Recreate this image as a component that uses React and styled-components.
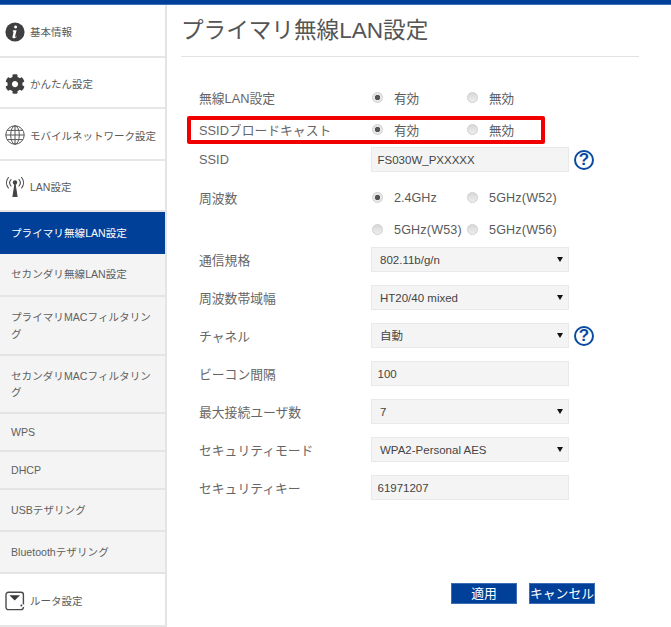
import React from "react";
import styled, { createGlobalStyle } from "styled-components";
import { FaCog } from "react-icons/fa";

const Global = createGlobalStyle`
  html, body { margin: 0; padding: 0; background: #fff; }
  body { font-family: "Liberation Sans", "Noto Sans CJK JP", sans-serif; overflow: hidden; }
  * { box-sizing: border-box; }
`;

const Page = styled.div`
  width: 671px;
  height: 627px;
  display: flex;
  flex-direction: column;
  overflow: hidden;
`;
const TopBar = styled.div`
  height: 5px;
  flex: none;
  background: #004098;
  border-bottom: 1px solid #3d6db3;
`;
const Body = styled.div`
  display: flex;
  flex: 1;
  min-height: 0;
`;
const Sidebar = styled.nav`
  width: 167px;
  flex: none;
  border-right: 2px solid #e4e4e4;
  display: flex;
  flex-direction: column;
`;
const MainItem = styled.a`
  height: ${(p) => p.$h}px;
  flex: none;
  display: flex;
  align-items: center;
  gap: 5px;
  padding: 2px 0 0 5px;
  background: #fff;
  border-bottom: 2px solid #e6e6e6;
  color: #5a5a5a;
  font-size: 10.5px;
`;
const IconBox = styled.span`
  width: 20px;
  height: 22px;
  flex: none;
  display: flex;
  align-items: center;
  justify-content: center;
  color: #3f3f3f;
`;
const SubItem = styled.a`
  height: ${(p) => p.$h}px;
  flex: none;
  display: flex;
  align-items: center;
  padding: 0 11px;
  background: ${(p) => (p.$active ? "#004098" : "#f4f4f4")};
  border-bottom: ${(p) => (p.$active ? "0" : "2px solid #e4e4e4")};
  color: ${(p) => (p.$active ? "#fff" : "#5f5f5f")};
  font-size: 10.6px;
  line-height: 16.5px;
`;
const Main = styled.main`
  flex: 1;
  padding-left: 15px;
  display: flex;
  flex-direction: column;
`;
const Title = styled.h1`
  width: 458px;
  height: 52px;
  margin: 0 0 0 -1px;
  padding-top: 10px;
  border-bottom: 1px solid #e2e2e2;
  font-size: 22.6px;
  line-height: 32px;
  font-weight: 400;
  color: #555;
`;
const Form = styled.form`
  margin: 28px 0 0 17px;
  display: flex;
  flex-direction: column;
`;
const Row = styled.div`
  position: relative;
  height: 25px;
  margin-bottom: ${(p) => p.$gap}px;
  display: flex;
  align-items: center;
`;
const Label = styled.label`
  width: 172px;
  flex: none;
  font-size: 12.8px;
  color: #666;
`;
const Highlight = styled.span`
  position: absolute;
  left: -12px;
  top: -1px;
  width: 358px;
  height: 28px;
  border: 4px solid #f00000;
  border-radius: 2px;
  pointer-events: none;
`;
const Option = styled.label`
  width: 95px;
  flex: none;
  display: flex;
  align-items: center;
  font-size: 12.6px;
  color: #5a5a5a;
  white-space: nowrap;
  letter-spacing: ${(p) => (p.$wide ? "0.15px" : "0")};
`;
const Radio = styled.input.attrs({ type: "radio" })`
  appearance: none;
  width: 11px;
  height: 11px;
  margin: 0 11px 1px 1px;
  flex: none;
  border-radius: 50%;
  border: 1px solid #cfcfcf;
  background: ${(p) =>
    p.checked
      ? "radial-gradient(circle, #555 0 2.4px, #e8e8e8 3px)"
      : "linear-gradient(#d8d8d8, #eeeeee)"};
`;
const TextField = styled.input`
  width: 198px;
  height: 25px;
  padding: 0 5.5px;
  border: 1px solid #e9e9e9;
  background: #f4f4f4;
  font: inherit;
  font-size: 11.5px;
  color: #444;
  outline: none;
`;
const SelectWrap = styled.div`
  position: relative;
  width: 198px;
  height: 25px;
  &::after {
    content: "";
    position: absolute;
    right: 6px;
    top: 10px;
    border-left: 3px solid transparent;
    border-right: 3px solid transparent;
    border-top: 5px solid #111;
  }
`;
const Select = styled.select`
  appearance: none;
  width: 100%;
  height: 100%;
  padding: 0 8px;
  border: 1px solid #e9e9e9;
  border-radius: 0;
  background: #f4f4f4;
  font: inherit;
  font-size: 11.5px;
  color: #444;
  outline: none;
`;
const Help = styled.span`
  width: 20px;
  height: 20px;
  margin-left: 5px;
  flex: none;
  display: flex;
  align-items: center;
  justify-content: center;
  border: 2px solid #0b4a9f;
  border-radius: 50%;
  color: #0b4a9f;
  font-size: 17px;
  font-weight: 700;
`;
const Actions = styled.div`
  margin: 83px 0 0 252px;
  display: flex;
  gap: 12px;
`;
const Button = styled.button`
  width: 66px;
  height: 21px;
  padding: 0;
  border: 1px solid #3d6db3;
  background: #004098;
  color: #fff;
  font: inherit;
  font-size: 12.8px;
  line-height: 19px;
  white-space: nowrap;
`;

const InfoIcon = () => (
  <svg width="20" height="20" viewBox="0 0 20 20">
    <circle cx="10" cy="10" r="9.6" fill="#3f3f3f" />
    <path d="M10.6 3.6a1.5 1.5 0 1 1-.01 0zM8 8.3h3.6L10 14.4c-.1.5.4.5 1.4-.2l.2.5c-1.4 1.2-2.4 1.6-3.3 1.5-.8-.1-1-.7-.8-1.5l1-4.6c.1-.5-.2-.7-.7-.7z" fill="#fff" />
  </svg>
);
const GlobeIcon = () => (
  <svg width="20" height="20" viewBox="0 0 20 20" fill="none" stroke="#555" strokeWidth="1">
    <circle cx="10" cy="10" r="9.2" />
    <ellipse cx="10" cy="10" rx="4.3" ry="9.2" />
    <path d="M10 .8v18.4M.8 10h18.4M2.2 5.4h15.6M2.2 14.6h15.6" />
  </svg>
);
const AntennaIcon = () => (
  <svg width="20" height="22" viewBox="0 0 20 22" fill="none" stroke="#444" strokeWidth="1.1" strokeLinecap="round">
    <circle cx="10" cy="6.5" r="2.2" fill="#444" stroke="none" />
    <path d="M10 7.5L8 20.5h4L10 7.5z" fill="#444" />
    <path d="M6 3.5a5 5 0 0 0 0 6.5M14 3.5a5 5 0 0 1 0 6.5M3.4 1.5a8.4 8.4 0 0 0 0 10.5M16.6 1.5a8.4 8.4 0 0 1 0 10.5" />
  </svg>
);
const RouterIcon = () => (
  <svg width="20" height="20" viewBox="0 0 20 20" fill="none">
    <rect x="1" y="1.2" width="17.4" height="17.4" rx="2.4" stroke="#4a4a4a" strokeWidth="1.4" />
    <path d="M4.4 4.2h10.6L9.7 9.6z" fill="#3a3a3a" />
    <rect x="15.6" y="13.4" width="3.4" height="2.6" fill="#fff" />
    <circle cx="16.4" cy="14.6" r="1" fill="#3a3a3a" />
  </svg>
);

const OnOff = ({ name, on }) => (
  <>
    <Option>
      <Radio name={name} checked={on} readOnly />
      有効
    </Option>
    <Option>
      <Radio name={name} checked={false} readOnly />
      無効
    </Option>
  </>
);

const Dropdown = ({ value }) => (
  <SelectWrap>
    <Select value={value} onChange={() => {}}>
      <option>{value}</option>
    </Select>
  </SelectWrap>
);

const subItems = [
  ["プライマリ無線LAN設定", 42, true],
  ["セカンダリ無線LAN設定", 43],
  ["プライマリMACフィルタリング", 59],
  ["セカンダリMACフィルタリング", 58],
  ["WPS", 38],
  ["DHCP", 38],
  ["USBテザリング", 42],
  ["Bluetoothテザリング", 42],
];

export default function App() {
  return (
    <Page>
      <Global />
      <TopBar />
      <Body>
        <Sidebar>
          <MainItem $h={53}><IconBox><InfoIcon /></IconBox>基本情報</MainItem>
          <MainItem $h={51}><IconBox><FaCog size={20} /></IconBox>かんたん設定</MainItem>
          <MainItem $h={52}><IconBox><GlobeIcon /></IconBox>モバイルネットワーク設定</MainItem>
          <MainItem $h={51}><IconBox><AntennaIcon /></IconBox>LAN設定</MainItem>
          {subItems.map(([text, h, active]) => (
            <SubItem key={text} $h={h} $active={active}>{text}</SubItem>
          ))}
          <MainItem $h={53}><IconBox><RouterIcon /></IconBox>ルータ設定</MainItem>
        </Sidebar>
        <Main>
          <Title>プライマリ無線LAN設定</Title>
          <Form>
            <Row $gap={7}>
              <Label>無線LAN設定</Label>
              <OnOff name="wlan" on />
            </Row>
            <Row $gap={5}>
              <Label>SSIDブロードキャスト</Label>
              <OnOff name="ssid" on />
              <Highlight />
            </Row>
            <Row $gap={13}>
              <Label>SSID</Label>
              <TextField value="FS030W_PXXXXX" readOnly />
              <Help>?</Help>
            </Row>
            <Row $gap={7}>
              <Label>周波数</Label>
              <Option><Radio name="freq" checked readOnly />2.4GHz</Option>
              <Option $wide><Radio name="freq" checked={false} readOnly />5GHz(W52)</Option>
            </Row>
            <Row $gap={5}>
              <Label />
              <Option $wide><Radio name="freq" checked={false} readOnly />5GHz(W53)</Option>
              <Option $wide><Radio name="freq" checked={false} readOnly />5GHz(W56)</Option>
            </Row>
            <Row $gap={13}>
              <Label>通信規格</Label>
              <Dropdown value="802.11b/g/n" />
            </Row>
            <Row $gap={13}>
              <Label>周波数帯域幅</Label>
              <Dropdown value="HT20/40 mixed" />
            </Row>
            <Row $gap={13}>
              <Label>チャネル</Label>
              <Dropdown value="自動" />
              <Help>?</Help>
            </Row>
            <Row $gap={13}>
              <Label>ビーコン間隔</Label>
              <TextField value="100" readOnly />
            </Row>
            <Row $gap={13}>
              <Label>最大接続ユーザ数</Label>
              <Dropdown value="7" />
            </Row>
            <Row $gap={13}>
              <Label>セキュリティモード</Label>
              <Dropdown value="WPA2-Personal AES" />
            </Row>
            <Row $gap={0}>
              <Label>セキュリティキー</Label>
              <TextField value="61971207" readOnly />
            </Row>
            <Actions>
              <Button type="button">適用</Button>
              <Button type="button">キャンセル</Button>
            </Actions>
          </Form>
        </Main>
      </Body>
    </Page>
  );
}
